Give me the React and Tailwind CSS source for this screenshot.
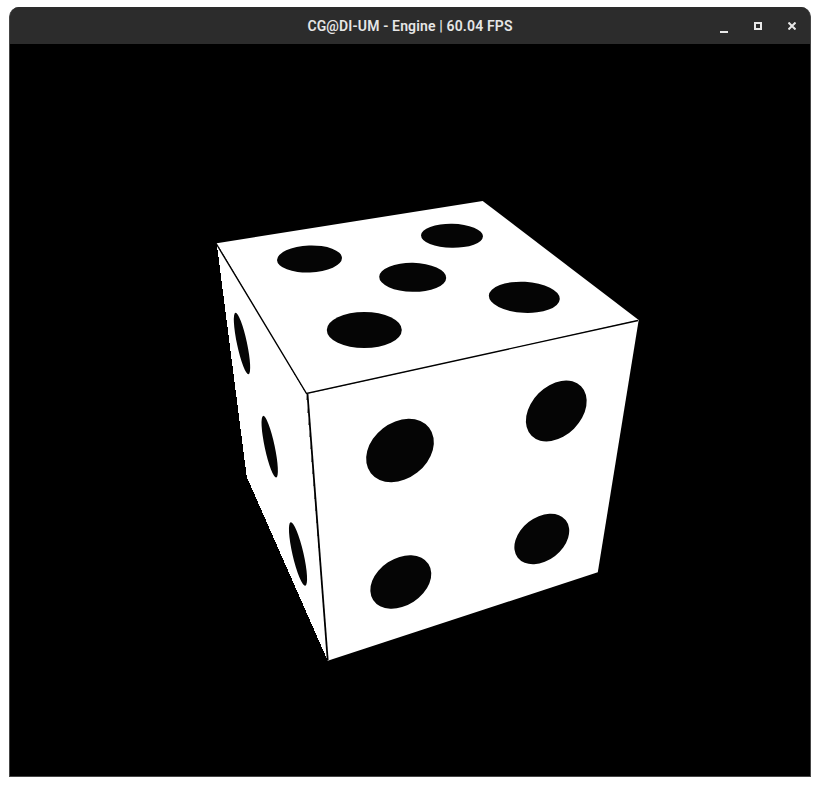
const topPips = [
  { cx: 309.5, cy: 259, rx: 32.5, ry: 13.5, rot: -2 },
  { cx: 452, cy: 235.8, rx: 31, ry: 12, rot: 1 },
  { cx: 412.7, cy: 277.3, rx: 33.5, ry: 14.5, rot: 1 },
  { cx: 524.3, cy: 297.3, rx: 35.5, ry: 15.5, rot: 3 },
  { cx: 364.3, cy: 330, rx: 37.5, ry: 18, rot: 0 },
];

const frontPips = [
  { cx: 400, cy: 450.5, rx: 37, ry: 28, rot: -38 },
  { cx: 556.3, cy: 411, rx: 35, ry: 25, rot: -45 },
  { cx: 400.8, cy: 582, rx: 33, ry: 23.5, rot: -33 },
  { cx: 541.8, cy: 539, rx: 30.5, ry: 21.5, rot: -38 },
];

const leftPips = [
  { cx: 242, cy: 343.5, rx: 31.5, ry: 5, rot: 78 },
  { cx: 269.7, cy: 446.7, rx: 31.5, ry: 5, rot: 78 },
  { cx: 298, cy: 554, rx: 32.5, ry: 5.5, rot: 77 },
];

function Pip({ cx, cy, rx, ry, rot }) {
  return <ellipse cx={cx} cy={cy} rx={rx} ry={ry} transform={`rotate(${rot} ${cx} ${cy})`} fill="#050505" />;
}

function Dice() {
  // drawn in page coordinates, the canvas starts at 10,44
  return (
    <svg viewBox="10 44 800 732" className="block w-full h-full">
      <polygon points="216.7,243.3 306,394 327.7,660.7 246.7,476.7" fill="#fff" shapeRendering="crispEdges" />
      <polygon points="216.7,243.3 482.7,201 638.7,320 306,394" fill="#fff" />
      <polygon points="306,394 638.7,320 597.8,572.3 327.7,660.7" fill="#fff" />
      {leftPips.map((p) => <Pip key={p.cy} {...p} />)}
      {topPips.map((p) => <Pip key={p.cx} {...p} />)}
      {frontPips.map((p) => <Pip key={p.cy} {...p} />)}
      <polyline points="217,245 306.5,393.5 638,320.5" fill="none" stroke="#000" strokeWidth="1.4" />
      <line x1="307.5" y1="394" x2="327.7" y2="660" stroke="#000" strokeWidth="1.8" />
    </svg>
  );
}

export default function App() {
  return (
    <div className="w-[820px] h-[786px] bg-white pt-[7px] pl-[9px] overflow-hidden">
      <div className="w-[802px] h-[770px] flex flex-col bg-[#3a3a3a] rounded-t-[10px] overflow-hidden border-x border-b border-[#454545]">
        <div className="relative h-[37px] shrink-0 flex items-center justify-center bg-[#2c2c2c] -mx-px">
          <span className="font-['Roboto',sans-serif] font-semibold text-[14px] tracking-[0.15px] text-[#e6e6e6] leading-none">
            CG@DI-UM - Engine | 60.04 FPS
          </span>
          <div className="absolute right-[15px] top-[15px] flex items-center gap-[26px] text-[#e8e8e8]">
            <svg width="8" height="8" viewBox="0 0 8 8" className="block translate-y-[3px]">
              <rect x="0" y="6" width="8" height="2" fill="currentColor" />
            </svg>
            <svg width="8" height="8" viewBox="0 0 8 8" className="block">
              <rect x="1" y="1" width="6" height="6" fill="none" stroke="currentColor" strokeWidth="2" />
            </svg>
            <svg width="8" height="8" viewBox="0 0 8 8" className="block">
              <path d="M0.5 0.5 7.5 7.5 M7.5 0.5 0.5 7.5" fill="none" stroke="currentColor" strokeWidth="2" />
            </svg>
          </div>
        </div>
        <div className="flex-1 min-h-0 bg-black">
          <Dice />
        </div>
      </div>
    </div>
  );
}
